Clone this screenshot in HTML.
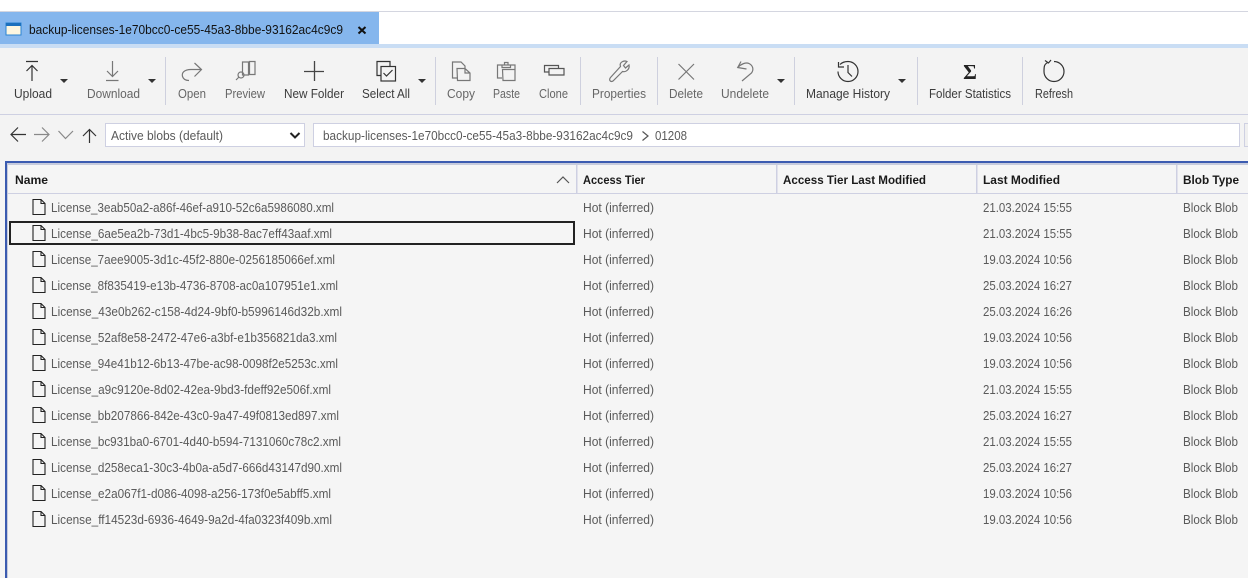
<!DOCTYPE html>
<html><head><meta charset="utf-8"><title>Blobs</title>
<style>
html,body{margin:0;padding:0;background:#f5f5f5;overflow:hidden}
svg{display:block;font-family:"Liberation Sans",sans-serif;font-size:12.5px}
.d{fill:#3c3c3c}.g{fill:#666}.r{fill:#5a5a5a}.h{fill:#1a1a1a;font-weight:bold;font-size:12px}
.i{fill:none;stroke:#333;stroke-width:1.2}.ig{fill:none;stroke:#777;stroke-width:1.2}
.f{fill:none;stroke:#222;stroke-width:1.1}
</style></head><body>
<svg xmlns="http://www.w3.org/2000/svg" width="1248" height="578" viewBox="0 0 1248 578">
<defs>
<symbol id="file" overflow="visible"><path class="f" d="M33 199.5H41L45 203.500V214.500H33Z M41 199.500V203.500H45"/></symbol>
</defs>
<!-- top -->
<rect width="1248" height="578" fill="#f5f5f5"/>
<rect width="1248" height="44" fill="#fff"/>
<rect y="11" width="1248" height="1" fill="#d4d6e0"/>
<rect y="12" width="379" height="32" fill="#85b6ed"/>
<rect y="44" width="1248" height="4" fill="#c9ddf4"/>
<rect y="48" width="1248" height="66" fill="#f3f3f3"/>
<rect y="114" width="1248" height="1" fill="#ced0e2"/>
<rect y="115" width="1248" height="46" fill="#f3f3f3"/>
<!-- tab -->
<rect x="6" y="23" width="15" height="12" fill="#fdf6e0" stroke="#2a84d2" stroke-width="1"/>
<rect x="6" y="23" width="15" height="3" fill="#1c70bd"/>
<text x="29" y="34" fill="#111" textLength="314" lengthAdjust="spacingAndGlyphs">backup-licenses-1e70bcc0-ce55-45a3-8bbe-93162ac4c9c9</text>
<path d="M358.500 27L365.500 33.500M365.500 27L358.500 33.500" stroke="#111" stroke-width="2" fill="none"/>
<!-- separators -->
<g fill="#ced0de">
<rect x="165" y="57" width="1" height="48"/><rect x="435" y="57" width="1" height="48"/><rect x="580" y="57" width="1" height="48"/><rect x="657" y="57" width="1" height="48"/><rect x="794" y="57" width="1" height="48"/><rect x="917" y="57" width="1" height="48"/><rect x="1022" y="57" width="1" height="48"/>
</g>
<!-- dropdown arrows -->
<g fill="#333">
<path d="M60 79H68L64 83Z"/><path d="M148 79H156L152 83Z"/><path d="M418 79H426L422 83Z"/><path d="M777 79H785L781 83Z"/><path d="M898 79H906L902 83Z"/>
</g>
<!-- toolbar icons -->
<path class="i" d="M26 61.500H38M32 81V65.500M26.500 71L32 65.500L37.500 71"/>
<path class="ig" d="M106 80.500H118.500M112.500 61V76.500M107 71L112.500 76.500L118 71"/>
<path class="ig" d="M201.500 69.500H191C184 69.500 181.500 73 182.500 76.500C183.500 79.500 186 80.500 189 80.500M194.500 63L201.500 69.500L194.500 76.500"/>
<path class="ig" d="M242.500 62H248.500V75H242.500ZM249.500 61.500H255V74.500H249.500ZM236 80L239 77"/><circle class="ig" cx="241" cy="75" r="3"/>
<path d="M304 71.500H324M314.500 61V81" stroke="#444" stroke-width="1.300" fill="none"/>
<path class="i" d="M380.500 75.500H377V61.500H390V66"/><rect class="i" x="381" y="66.500" width="14.500" height="14.500"/><path class="i" d="M383.500 73L386.500 76L392.500 70"/>
<path class="ig" stroke-width="1.300" d="M457 78H452.500V62H461L465 66V68M457 68.500H465L470 73V80.500H457.500ZM465 68.500V73H470"/>
<path class="ig" d="M502 78H497.500V65H515V69M502.500 69.500H515V80.500H503ZM502 65V67.500H510.500V65H508V62.500H504.500V65"/>
<path class="ig" d="M549 72H544.500V65.500H558.500V68M549 68.500H564V75H549Z" style="stroke:#555"/>
<path class="ig" d="M610.500 77.500L620.500 66.500C619 62.500 623.500 60 627 61.500L623.500 65.500L625.500 68L629 65C630 69 626 72.500 622.500 71.500L613 81C610.500 82.500 608.500 80 610.500 77.500Z"/>
<path class="ig" d="M678.500 64L694 79.500M694 64L678.500 79.500"/>
<path class="ig" d="M741 61.500L737.700 67.500L746.500 69M737.700 67.500C741 64 746 62 749 63.500C753 65.500 754 69.500 751.500 73L742 81"/>
<path class="i" d="M840 64.500C842 62.500 845 61.500 848 61.500C853.500 61.500 858 66 858 71.500C858 77 853.500 81.500 848 81.500C842.500 81.500 838 77 838 71.500M838.500 62V67H844M848 65V72.500L852 76.500"/>
<text x="970" y="79" text-anchor="middle" font-family="Liberation Serif" font-size="21" font-weight="bold" fill="#222">Σ</text>
<path class="i" d="M1048 62.500C1044 64 1044 67 1044 71.500C1044 77 1048.500 81.500 1054 81.500C1059.500 81.500 1064 77 1064 71.500C1064 66 1059.500 61.500 1054 61.500M1045 60.500L1048.500 63L1051 60"/>
<!-- toolbar labels -->
<g>
<text class="d" x="14" y="98" textLength="38" lengthAdjust="spacingAndGlyphs">Upload</text>
<text class="g" x="87" y="98" textLength="53" lengthAdjust="spacingAndGlyphs">Download</text>
<text class="g" x="178" y="98" textLength="28" lengthAdjust="spacingAndGlyphs">Open</text>
<text class="g" x="225" y="98" textLength="40" lengthAdjust="spacingAndGlyphs">Preview</text>
<text class="d" x="284" y="98" textLength="60" lengthAdjust="spacingAndGlyphs">New Folder</text>
<text class="d" x="362" y="98" textLength="48" lengthAdjust="spacingAndGlyphs">Select All</text>
<text class="g" x="447" y="98" textLength="28" lengthAdjust="spacingAndGlyphs">Copy</text>
<text class="g" x="493" y="98" textLength="27" lengthAdjust="spacingAndGlyphs">Paste</text>
<text class="g" x="539" y="98" textLength="29" lengthAdjust="spacingAndGlyphs">Clone</text>
<text class="g" x="592" y="98" textLength="54" lengthAdjust="spacingAndGlyphs">Properties</text>
<text class="g" x="669" y="98" textLength="34" lengthAdjust="spacingAndGlyphs">Delete</text>
<text class="g" x="721" y="98" textLength="48" lengthAdjust="spacingAndGlyphs">Undelete</text>
<text class="d" x="806" y="98" textLength="84" lengthAdjust="spacingAndGlyphs">Manage History</text>
<text class="d" x="929" y="98" textLength="82" lengthAdjust="spacingAndGlyphs">Folder Statistics</text>
<text class="d" x="1035" y="98" textLength="38" lengthAdjust="spacingAndGlyphs">Refresh</text>
</g>
<!-- nav -->
<path class="i" d="M11 134.500H26M18 127.500L11 134.500L18 141.500"/>
<path class="ig" style="stroke:#888" d="M34 134.500H49M42 127.500L49 134.500L42 141.500"/>
<path class="ig" style="stroke:#888" d="M58.500 131L65.500 138.500L73 131"/>
<path class="i" d="M89.500 143V129.500M83 136L89.500 129.500L96 136"/>
<rect x="105.500" y="123.500" width="199" height="23" fill="#fff" stroke="#ced0e2"/>
<text class="r" x="111" y="140" textLength="112" lengthAdjust="spacingAndGlyphs">Active blobs (default)</text>
<path d="M290.500 133L295 137.500L299.500 133" fill="none" stroke="#222" stroke-width="2"/>
<rect x="313.500" y="123.500" width="926" height="23" fill="#fff" stroke="#ced0e2"/>
<text class="r" x="323" y="140" textLength="310" lengthAdjust="spacingAndGlyphs">backup-licenses-1e70bcc0-ce55-45a3-8bbe-93162ac4c9c9</text>
<path class="ig" style="stroke:#555" d="M642.500 131.500L648 136L642.500 140.500"/>
<text class="r" x="655" y="140" textLength="32" lengthAdjust="spacingAndGlyphs">01208</text>
<rect x="1244.500" y="123.500" width="10" height="23" fill="#f0f0f0" stroke="#ced0e2"/>
<!-- panel -->
<rect x="5" y="161" width="1243" height="417" fill="#f5f5f5"/>
<rect x="5" y="161" width="1243" height="2" fill="#3b5bb0"/>
<rect x="5" y="161" width="2" height="417" fill="#3b5bb0"/>
<rect x="7" y="163" width="1241" height="2" fill="#c6cbdd"/>
<rect x="7" y="163" width="1" height="415" fill="#c6cbdd"/>
<rect x="8" y="193" width="1240" height="1" fill="#ced0e2"/>
<g fill="#ced0e2">
<rect x="576" y="165" width="1.500" height="28"/><rect x="776" y="165" width="1.500" height="28"/><rect x="976" y="165" width="1.500" height="28"/><rect x="1176" y="165" width="1.500" height="28"/>
</g>
<text class="h" x="15" y="184" textLength="33" lengthAdjust="spacingAndGlyphs">Name</text>
<text class="h" x="583" y="184" textLength="62" lengthAdjust="spacingAndGlyphs">Access Tier</text>
<text class="h" x="783" y="184" textLength="143" lengthAdjust="spacingAndGlyphs">Access Tier Last Modified</text>
<text class="h" x="983" y="184" textLength="77" lengthAdjust="spacingAndGlyphs">Last Modified</text>
<text class="h" x="1183" y="184" textLength="56" lengthAdjust="spacingAndGlyphs">Blob Type</text>
<path class="ig" style="stroke:#555" d="M557 183L563 177L569 183"/>
<!-- selected row -->
<rect x="10" y="222" width="564" height="22" fill="none" stroke="#222" stroke-width="2"/>
<!-- rows -->
<use href="#file" y="0"/><text class="r" x="51" y="212" textLength="283" lengthAdjust="spacingAndGlyphs">License_3eab50a2-a86f-46ef-a910-52c6a5986080.xml</text><text class="r" x="583" y="212" textLength="71" lengthAdjust="spacingAndGlyphs">Hot (inferred)</text><text class="r" x="983" y="212" textLength="89" lengthAdjust="spacingAndGlyphs">21.03.2024 15:55</text><text class="r" x="1183" y="212" textLength="55" lengthAdjust="spacingAndGlyphs">Block Blob</text>
<use href="#file" y="26"/><text class="r" x="51" y="238" textLength="281" lengthAdjust="spacingAndGlyphs">License_6ae5ea2b-73d1-4bc5-9b38-8ac7eff43aaf.xml</text><text class="r" x="583" y="238" textLength="71" lengthAdjust="spacingAndGlyphs">Hot (inferred)</text><text class="r" x="983" y="238" textLength="89" lengthAdjust="spacingAndGlyphs">21.03.2024 15:55</text><text class="r" x="1183" y="238" textLength="55" lengthAdjust="spacingAndGlyphs">Block Blob</text>
<use href="#file" y="52"/><text class="r" x="51" y="264" textLength="284" lengthAdjust="spacingAndGlyphs">License_7aee9005-3d1c-45f2-880e-0256185066ef.xml</text><text class="r" x="583" y="264" textLength="71" lengthAdjust="spacingAndGlyphs">Hot (inferred)</text><text class="r" x="983" y="264" textLength="89" lengthAdjust="spacingAndGlyphs">19.03.2024 10:56</text><text class="r" x="1183" y="264" textLength="55" lengthAdjust="spacingAndGlyphs">Block Blob</text>
<use href="#file" y="78"/><text class="r" x="51" y="290" textLength="287" lengthAdjust="spacingAndGlyphs">License_8f835419-e13b-4736-8708-ac0a107951e1.xml</text><text class="r" x="583" y="290" textLength="71" lengthAdjust="spacingAndGlyphs">Hot (inferred)</text><text class="r" x="983" y="290" textLength="89" lengthAdjust="spacingAndGlyphs">25.03.2024 16:27</text><text class="r" x="1183" y="290" textLength="55" lengthAdjust="spacingAndGlyphs">Block Blob</text>
<use href="#file" y="104"/><text class="r" x="51" y="316" textLength="291" lengthAdjust="spacingAndGlyphs">License_43e0b262-c158-4d24-9bf0-b5996146d32b.xml</text><text class="r" x="583" y="316" textLength="71" lengthAdjust="spacingAndGlyphs">Hot (inferred)</text><text class="r" x="983" y="316" textLength="89" lengthAdjust="spacingAndGlyphs">25.03.2024 16:26</text><text class="r" x="1183" y="316" textLength="55" lengthAdjust="spacingAndGlyphs">Block Blob</text>
<use href="#file" y="130"/><text class="r" x="51" y="342" textLength="286" lengthAdjust="spacingAndGlyphs">License_52af8e58-2472-47e6-a3bf-e1b356821da3.xml</text><text class="r" x="583" y="342" textLength="71" lengthAdjust="spacingAndGlyphs">Hot (inferred)</text><text class="r" x="983" y="342" textLength="89" lengthAdjust="spacingAndGlyphs">19.03.2024 10:56</text><text class="r" x="1183" y="342" textLength="55" lengthAdjust="spacingAndGlyphs">Block Blob</text>
<use href="#file" y="156"/><text class="r" x="51" y="368" textLength="287" lengthAdjust="spacingAndGlyphs">License_94e41b12-6b13-47be-ac98-0098f2e5253c.xml</text><text class="r" x="583" y="368" textLength="71" lengthAdjust="spacingAndGlyphs">Hot (inferred)</text><text class="r" x="983" y="368" textLength="89" lengthAdjust="spacingAndGlyphs">19.03.2024 10:56</text><text class="r" x="1183" y="368" textLength="55" lengthAdjust="spacingAndGlyphs">Block Blob</text>
<use href="#file" y="182"/><text class="r" x="51" y="394" textLength="280" lengthAdjust="spacingAndGlyphs">License_a9c9120e-8d02-42ea-9bd3-fdeff92e506f.xml</text><text class="r" x="583" y="394" textLength="71" lengthAdjust="spacingAndGlyphs">Hot (inferred)</text><text class="r" x="983" y="394" textLength="89" lengthAdjust="spacingAndGlyphs">21.03.2024 15:55</text><text class="r" x="1183" y="394" textLength="55" lengthAdjust="spacingAndGlyphs">Block Blob</text>
<use href="#file" y="208"/><text class="r" x="51" y="420" textLength="288" lengthAdjust="spacingAndGlyphs">License_bb207866-842e-43c0-9a47-49f0813ed897.xml</text><text class="r" x="583" y="420" textLength="71" lengthAdjust="spacingAndGlyphs">Hot (inferred)</text><text class="r" x="983" y="420" textLength="89" lengthAdjust="spacingAndGlyphs">25.03.2024 16:27</text><text class="r" x="1183" y="420" textLength="55" lengthAdjust="spacingAndGlyphs">Block Blob</text>
<use href="#file" y="234"/><text class="r" x="51" y="446" textLength="290" lengthAdjust="spacingAndGlyphs">License_bc931ba0-6701-4d40-b594-7131060c78c2.xml</text><text class="r" x="583" y="446" textLength="71" lengthAdjust="spacingAndGlyphs">Hot (inferred)</text><text class="r" x="983" y="446" textLength="89" lengthAdjust="spacingAndGlyphs">21.03.2024 15:55</text><text class="r" x="1183" y="446" textLength="55" lengthAdjust="spacingAndGlyphs">Block Blob</text>
<use href="#file" y="260"/><text class="r" x="51" y="472" textLength="291" lengthAdjust="spacingAndGlyphs">License_d258eca1-30c3-4b0a-a5d7-666d43147d90.xml</text><text class="r" x="583" y="472" textLength="71" lengthAdjust="spacingAndGlyphs">Hot (inferred)</text><text class="r" x="983" y="472" textLength="89" lengthAdjust="spacingAndGlyphs">25.03.2024 16:27</text><text class="r" x="1183" y="472" textLength="55" lengthAdjust="spacingAndGlyphs">Block Blob</text>
<use href="#file" y="286"/><text class="r" x="51" y="498" textLength="280" lengthAdjust="spacingAndGlyphs">License_e2a067f1-d086-4098-a256-173f0e5abff5.xml</text><text class="r" x="583" y="498" textLength="71" lengthAdjust="spacingAndGlyphs">Hot (inferred)</text><text class="r" x="983" y="498" textLength="89" lengthAdjust="spacingAndGlyphs">19.03.2024 10:56</text><text class="r" x="1183" y="498" textLength="55" lengthAdjust="spacingAndGlyphs">Block Blob</text>
<use href="#file" y="312"/><text class="r" x="51" y="524" textLength="281" lengthAdjust="spacingAndGlyphs">License_ff14523d-6936-4649-9a2d-4fa0323f409b.xml</text><text class="r" x="583" y="524" textLength="71" lengthAdjust="spacingAndGlyphs">Hot (inferred)</text><text class="r" x="983" y="524" textLength="89" lengthAdjust="spacingAndGlyphs">19.03.2024 10:56</text><text class="r" x="1183" y="524" textLength="55" lengthAdjust="spacingAndGlyphs">Block Blob</text>
</svg>
</body></html>
